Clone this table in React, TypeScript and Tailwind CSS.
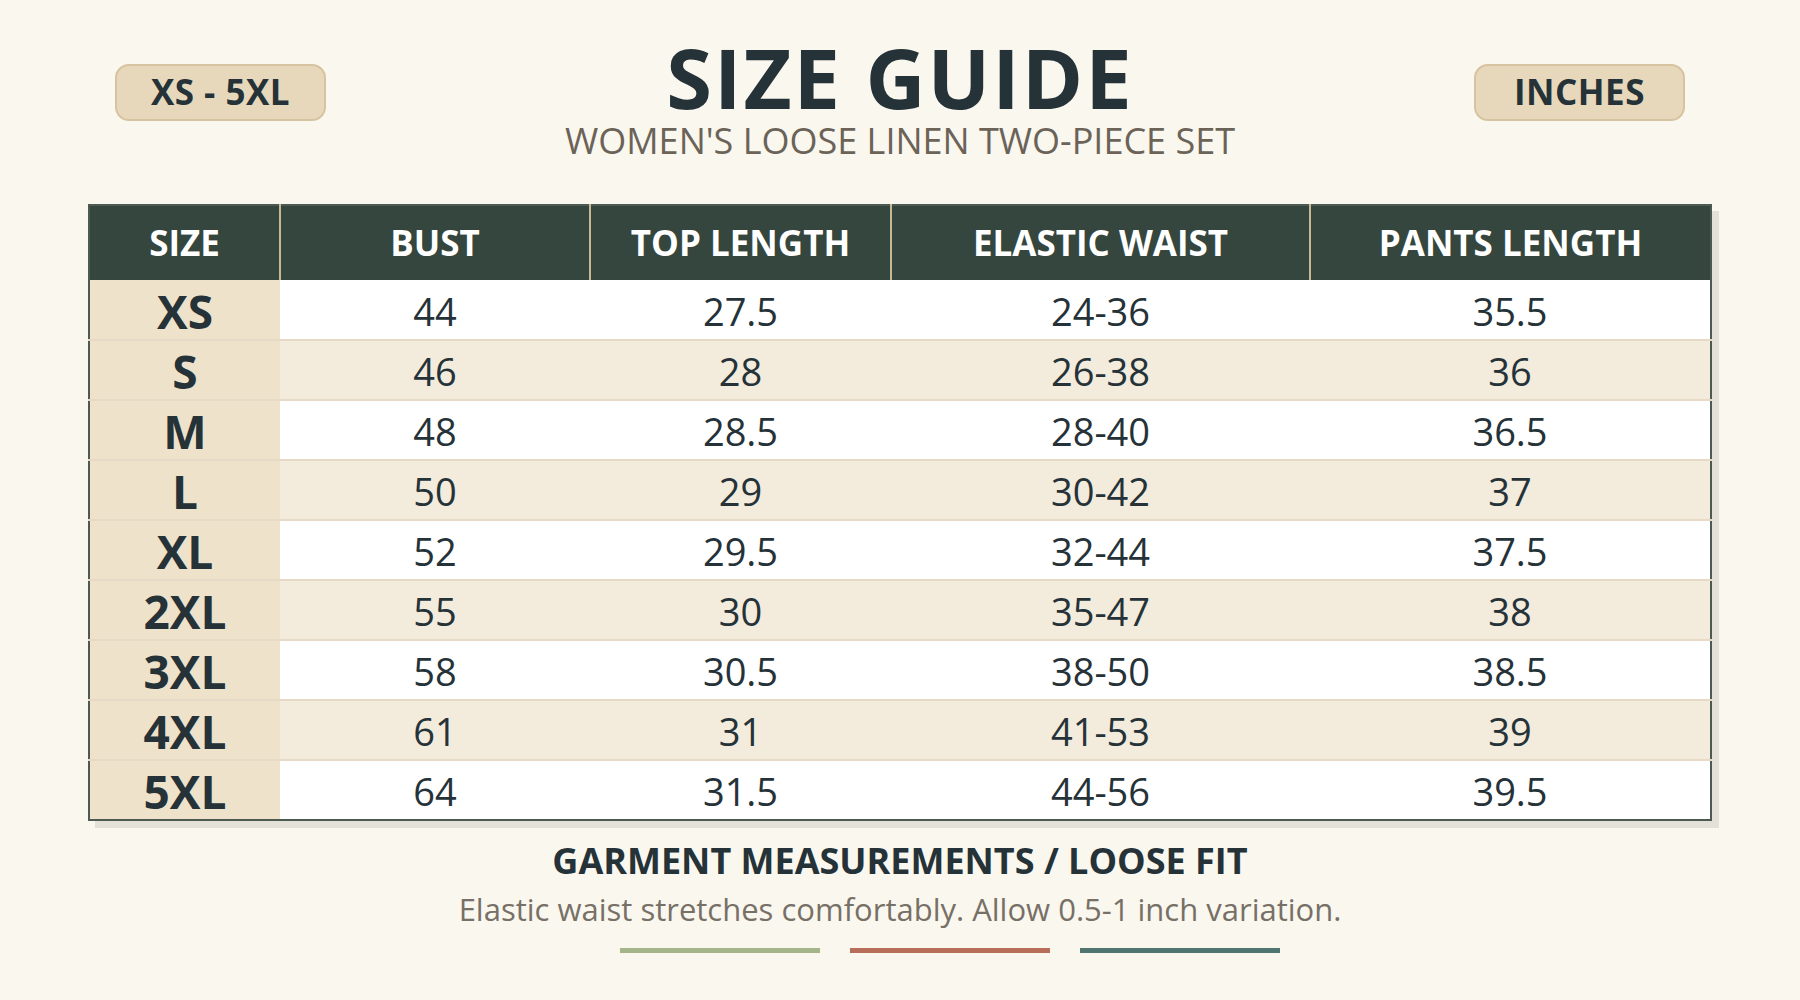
import React from "react";

const rows = [
  ["XS", "44", "27.5", "24-36", "35.5"],
  ["S", "46", "28", "26-38", "36"],
  ["M", "48", "28.5", "28-40", "36.5"],
  ["L", "50", "29", "30-42", "37"],
  ["XL", "52", "29.5", "32-44", "37.5"],
  ["2XL", "55", "30", "35-47", "38"],
  ["3XL", "58", "30.5", "38-50", "38.5"],
  ["4XL", "61", "31", "41-53", "39"],
  ["5XL", "64", "31.5", "44-56", "39.5"],
];

const heads = ["SIZE", "BUST", "TOP LENGTH", "ELASTIC WAIST", "PANTS LENGTH"];
const widths = ["w-[191px]", "w-[310px]", "w-[301px]", "w-[419px]", "w-[401px]"];

export default function App() {
  return (
    <div
      className="w-[1800px] h-[1000px] bg-[#faf7ef] text-[#253238] overflow-hidden"
      style={{ fontFamily: '"Open Sans", "Noto Sans", sans-serif' }}
    >
      <div className="grid grid-cols-[1fr_auto_1fr] items-start px-[115px] pt-[38px]">
        <div className="pt-[26px]">
          <div className="w-[211px] h-[57px] rounded-[14px] bg-[#e8d8bb] border-2 border-[#d6c39f] flex items-center justify-center text-[35px] font-bold tracking-[0.5px]">
            XS - 5XL
          </div>
        </div>
        <div className="flex flex-col items-center">
          <div className="text-[83px] font-bold leading-[78px] tracking-[2px] text-[#253238]">SIZE GUIDE</div>
          <div className="text-[36px] leading-[40px] text-[#6b6357] mt-[5px]">WOMEN'S LOOSE LINEN TWO-PIECE SET</div>
        </div>
        <div className="pt-[26px] flex justify-end">
          <div className="w-[211px] h-[57px] rounded-[14px] bg-[#e8d8bb] border-2 border-[#d6c39f] flex items-center justify-center text-[35px] font-bold tracking-[0.5px]">
            INCHES
          </div>
        </div>
      </div>

      <div className="ml-[88px] mt-[43px] w-[1624px] relative">
        <div className="absolute left-[7px] top-[7px] w-[1624px] h-full bg-[#e4e1d9]" />
        <table className="relative w-[1624px] border-collapse border-2 border-[#4c5a52] table-fixed">
          <thead>
            <tr className="bg-[#34463d] h-[75px]">
              {heads.map((h, i) => (
                <th
                  key={h}
                  className={`${widths[i]} text-white text-[35px] font-bold p-0 ${i > 0 ? "border-l-2 border-[#c9b894]" : ""}`}
                >
                  {h}
                </th>
              ))}
            </tr>
          </thead>
          <tbody>
            {rows.map((r, ri) => (
              <tr
                key={r[0]}
                className={`h-[60px] ${ri % 2 === 0 ? "bg-white" : "bg-[#f3ebdc]"} ${ri < rows.length - 1 ? "border-b-2 border-[#e6dac6]" : ""}`}
              >
                {r.map((c, ci) => (
                  <td
                    key={ci}
                    className={
                      ci === 0
                        ? "bg-[#efe2cb] text-center text-[46px] font-bold p-0 pt-[2px] leading-none"
                        : "text-center text-[38px] font-normal p-0 pt-[2px] leading-none text-[#253238]"
                    }
                  >
                    {c}
                  </td>
                ))}
              </tr>
            ))}
          </tbody>
        </table>
      </div>

      <div className="flex flex-col items-center mt-[17px]">
        <div className="text-[36px] font-bold leading-[46px] text-[#253238]">GARMENT MEASUREMENTS / LOOSE FIT</div>
        <div className="text-[31px] leading-[42px] text-[#777066] mt-[4px]">
          Elastic waist stretches comfortably. Allow 0.5-1 inch variation.
        </div>
        <div className="flex gap-[30px] mt-[18px] ml-[100px]">
          <div className="w-[200px] h-[5px] bg-[#a5b58a]" />
          <div className="w-[200px] h-[5px] bg-[#b86f5a]" />
          <div className="w-[200px] h-[5px] bg-[#4f7570]" />
        </div>
      </div>
    </div>
  );
}
